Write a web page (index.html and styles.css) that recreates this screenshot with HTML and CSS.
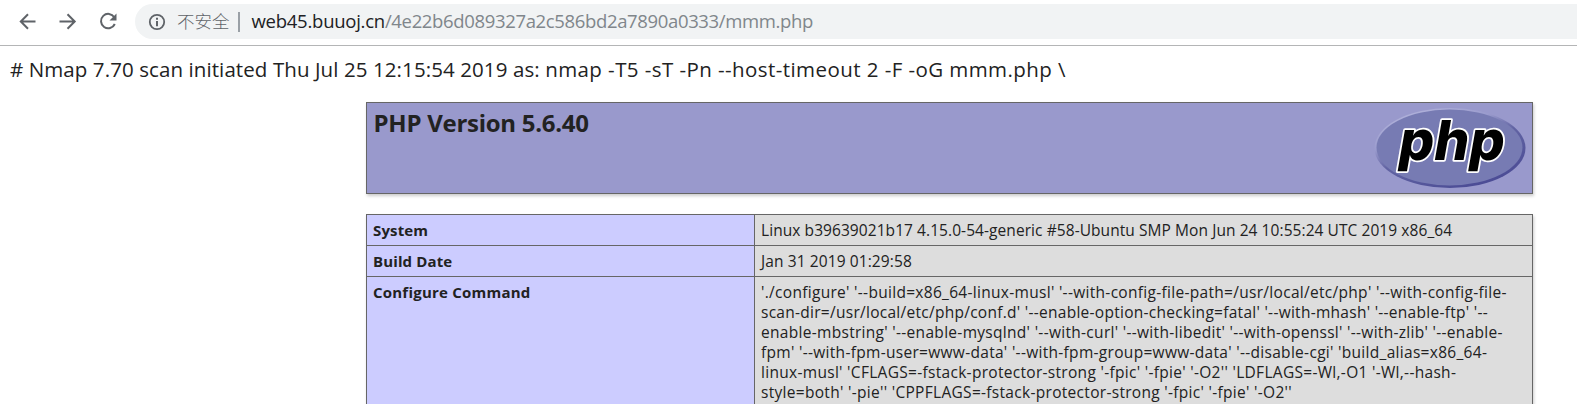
FILE: index.html
```html
<!DOCTYPE html>
<html lang="zh-CN">
<head>
<meta charset="utf-8">
<title>phpinfo()</title>
<link rel="stylesheet" href="styles.css">
</head>
<body>
<header class="toolbar">
  <svg class="nav" viewBox="0 0 135 44" width="135" height="44" fill="none" stroke="#5f6368" stroke-width="2">
    <path d="M35.500 21.500H21M28 14.300L20.800 21.500L28 28.700"/>
    <path d="M59.500 21.500H74.500M67.500 14.300L74.700 21.500L67.500 28.700"/>
    <path d="M114.300 17.200A7.200 7.200 0 1 0 114.800 24"/>
    <path d="M116.500 13.500V20.500H109.500Z" fill="#5f6368" stroke="none"/>
  </svg>
  <div class="omnibox">
    <svg class="info" viewBox="0 0 18 18" width="18" height="18">
      <circle cx="9" cy="9" r="7.200" fill="none" stroke="#5f6368" stroke-width="1.800"/>
      <path d="M8 4.800h2v2H8zM8 8h2v5.200H8z" fill="#5f6368"/>
    </svg>
    <span class="insecure">不安全</span>
    <span class="divider"></span>
    <span class="url"><span class="host">web45.buuoj.cn</span><span class="path">/4e22b6d089327a2c586bd2a7890a0333/mmm.php</span></span>
  </div>
</header>
<main>
  <p class="scan"># Nmap 7.70 scan initiated Thu Jul 25 12:15:54 2019 as: <span class="args">nmap -T5 -sT -Pn --host-timeout 2 -F -oG mmm.php \</span></p>
  <section class="banner">
    <h1>PHP Version 5.6.40</h1>
    <svg class="logo" viewBox="0 0 152 82" width="152" height="82">
      <defs>
        <linearGradient id="rim" x1="0.2" y1="0" x2="0.8" y2="1">
          <stop offset="0" stop-color="#b4b5dc"/>
          <stop offset="0.3" stop-color="#9a9bcd"/>
          <stop offset="0.5" stop-color="#6264a3"/>
          <stop offset="1" stop-color="#484893"/>
        </linearGradient>
      </defs>
      <ellipse cx="76" cy="41" rx="75.500" ry="40" fill="url(#rim)"/>
      <ellipse cx="75.500" cy="40.500" rx="73" ry="38" fill="#777bb3"/>
      <text class="wordmark" transform="translate(22.500 52.500) skewX(-10)">php</text>
    </svg>
  </section>
  <table class="info-table">
    <tr><th>System</th><td class="uname">Linux b39639021b17 4.15.0-54-generic #58-Ubuntu SMP Mon Jun 24 10:55:24 UTC 2019 x86_64</td></tr>
    <tr><th>Build Date</th><td class="date">Jan 31 2019 01:29:58</td></tr>
    <tr><th class="long">Configure Command</th><td class="command">
      <span class="line">'./configure' '--build=x86_64-linux-musl' '--with-config-file-path=/usr/local/etc/php' '--with-config-file-</span>
      <span class="line tight">scan-dir=/usr/local/etc/php/conf.d' '--enable-option-checking=fatal' '--with-mhash' '--enable-ftp' '--</span>
      <span class="line">enable-mbstring' '--enable-mysqlnd' '--with-curl' '--with-libedit' '--with-openssl' '--with-zlib' '--enable-</span>
      <span class="line">fpm' '--with-fpm-user=www-data' '--with-fpm-group=www-data' '--disable-cgi' 'build_alias=x86_64-</span>
      <span class="line">linux-musl' 'CFLAGS=-fstack-protector-strong '-fpic' '-fpie' '-O2'' 'LDFLAGS=-Wl,-O1 '-Wl,--hash-</span>
      <span class="line">style=both' '-pie'' 'CPPFLAGS=-fstack-protector-strong '-fpic' '-fpie' '-O2''</span>
    </td></tr>
  </table>
</main>
</body>
</html>
```
FILE: styles.css
```css
* { box-sizing: border-box; }
body {
  margin: 0;
  width: 1577px;
  height: 404px;
  overflow: hidden;
  background: #fff;
  color: #222;
  font-family: "Open Sans", "Noto Sans CJK SC", sans-serif;
}
.toolbar {
  display: flex;
  height: 46px;
  border-bottom: 1px solid #b4b5b6;
}
.nav { flex: none; }
.omnibox {
  display: flex;
  align-items: center;
  flex: 1;
  height: 35px;
  margin-top: 4px;
  padding-left: 13px;
  border-radius: 18px 0 0 18px;
  background: #f1f3f4;
}
.info { flex: none; }
.insecure {
  margin-left: 11px;
  color: #5f6368;
  font-family: "Noto Sans CJK SC", sans-serif;
  font-size: 17.5px;
  font-weight: 300;
  line-height: 33px;
  margin-bottom: 2px;
}
.divider {
  width: 2px;
  height: 20px;
  margin: 0 12px 0 8px;
  background: #9aa0a6;
}
.url {
  margin-bottom: 2px;
  font-size: 18.5px;
  line-height: 33px;
  white-space: nowrap;
}
.host { color: #202124; letter-spacing: -0.25px; }
.path { color: #80868b; letter-spacing: -0.35px; }
.scan {
  height: 56px;
  margin: 0;
  padding: 7px 0 0 10px;
  font-size: 20.5px;
  letter-spacing: 0.09px;
  line-height: 32px;
  white-space: nowrap;
}
.args { letter-spacing: 0.43px; }
.banner {
  display: flex;
  justify-content: space-between;
  width: 1167px;
  height: 92px;
  margin: 0 0 20px 366px;
  padding: 5px 6px;
  border: 1px solid #666;
  background: #9999cc;
  box-shadow: 1px 2px 3px #ccc;
}
h1 {
  margin: 0;
  padding-left: 0.5px;
  font-size: 24px;
  font-weight: 700;
  letter-spacing: -0.27px;
  line-height: 29px;
}
.logo { flex: none; margin-top: -1px; overflow: visible; }
.wordmark {
  font-family: Inter, sans-serif;
  font-size: 55px;
  font-weight: 800;
  letter-spacing: 0.3px;
  fill: #000;
  stroke: #fff;
  stroke-width: 3.5px;
  stroke-linejoin: round;
  paint-order: stroke;
}
.info-table {
  width: 1167px;
  margin-left: 366px;
  border-collapse: collapse;
  table-layout: fixed;
  box-shadow: 1px 2px 3px #ccc;
}
.info-table th,
.info-table td {
  padding: 5px 6px;
  border: 1px solid #666;
  font-size: 15.5px;
  line-height: 20px;
  text-align: left;
  vertical-align: top;
  white-space: nowrap;
}
.info-table th {
  width: 388px;
  background: #ccccff;
  font-size: 15px;
  letter-spacing: 0.13px;
}
.info-table .long { letter-spacing: 0.22px; }
.info-table td { background: #ddd; }
.uname { letter-spacing: 0.07px; }
.date { letter-spacing: 0.1px; }
.command { letter-spacing: 0.3px; }
.line { display: block; }
.tight { letter-spacing: 0.275px; }
```
